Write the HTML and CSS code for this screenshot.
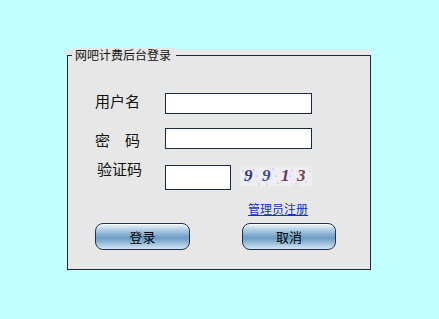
FILE: index.html
```html
<!DOCTYPE html>
<html lang="zh-CN">
<head>
<meta charset="utf-8">
<title>网吧计费后台登录</title>
<link rel="stylesheet" href="styles.css">
</head>
<body>
<div class="panel">
  <div class="box">
    <span class="legend">网吧计费后台登录</span>
    <div class="form">
      <div class="row r1"><span class="label l1">用户名</span><input class="field wide" type="text"></div>
      <div class="row r2"><span class="label l2">密　码</span><input class="field wide" type="password"></div>
      <div class="row r3"><span class="label l3">验证码</span><input class="field short" type="text">
        <svg class="captcha" width="72" height="19" viewBox="0 0 72 19">
          <rect width="72" height="19" fill="#eeeef2"/>
          <g fill="#8a8aa8">
            <circle cx="3" cy="4" r="0.6"/><circle cx="9" cy="15" r="0.6"/><circle cx="14" cy="3" r="0.6"/>
            <circle cx="19" cy="17" r="0.6"/><circle cx="24" cy="6" r="0.6"/><circle cx="29" cy="12" r="0.6"/>
            <circle cx="33" cy="2" r="0.6"/><circle cx="38" cy="16" r="0.6"/><circle cx="43" cy="5" r="0.6"/>
            <circle cx="47" cy="13" r="0.6"/><circle cx="52" cy="3" r="0.6"/><circle cx="56" cy="17" r="0.6"/>
            <circle cx="61" cy="8" r="0.6"/><circle cx="66" cy="15" r="0.6"/><circle cx="70" cy="4" r="0.6"/>
            <circle cx="6" cy="10" r="0.6"/><circle cx="17" cy="9" r="0.6"/><circle cx="36" cy="9" r="0.6"/>
            <circle cx="50" cy="9" r="0.6"/><circle cx="64" cy="11" r="0.6"/><circle cx="27" cy="17" r="0.6"/>
          </g>
          <g font-family="Liberation Serif, serif" font-style="italic" font-weight="bold" font-size="17">
            <text x="4" y="14" fill="#2b2f9a">9</text>
            <text x="22" y="14" fill="#3b4aa2">9</text>
            <text x="41" y="14" fill="#6a3560">1</text>
            <text x="57" y="14" fill="#7e4050">3</text>
          </g>
        </svg>
      </div>
      <div class="linkrow"><a class="link" href="#">管理员注册</a></div>
      <div class="buttons">
        <button class="btn b1" type="button">登录</button>
        <button class="btn b2" type="button">取消</button>
      </div>
    </div>
  </div>
</div>
</body>
</html>
```
FILE: styles.css
```css
html, body {
  margin: 0;
  padding: 0;
}
body {
  background: #c2ffff;
  font-family: "Noto Sans CJK SC", "Noto Sans", sans-serif;
  color: #000;
  width: 439px;
  height: 319px;
  overflow: hidden;
}
.panel {
  margin: 50px 0 0 67px;
  width: 304px;
  height: 220px;
  padding-top: 5px;
  box-sizing: border-box;
  background: #e7e7e7;
}
.box {
  position: relative;
  height: 215px;
  box-sizing: border-box;
  border: 1px solid #1b2a3e;
}
.legend {
  position: absolute;
  top: -8px;
  left: 4px;
  padding: 0 5px 0 3px;
  background: #e7e7e7;
  font-size: 12px;
  line-height: 14px;
  color: #111;
}
.form {
  padding: 37px 0 0 27px;
  display: flex;
  flex-direction: column;
}
.row {
  display: flex;
  align-items: flex-start;
}
.r1 { height: 21px; }
.r2 { height: 21px; margin-top: 14px; }
.r3 { height: 25px; margin-top: 16px; }
.label {
  width: 70px;
  box-sizing: border-box;
  font-size: 15px;
  line-height: 16px;
  color: #111;
  white-space: nowrap;
}
.l1 { margin-top: 0; }
.l2 { margin-top: 4px; }
.l3 { margin-top: -4px; padding-left: 2px; }
.field {
  margin: 0;
  padding: 0 2px;
  box-sizing: border-box;
  border: 1px solid #1b2a44;
  background: #fff;
  outline: none;
}
.wide { width: 147px; height: 21px; }
.short { width: 66px; height: 25px; }
.captcha {
  display: block;
  margin: 2px 0 0 9px;
}
.linkrow {
  margin: 10px 0 0 153px;
  height: 14px;
  line-height: 14px;
}
.link {
  font-size: 12px;
  color: #1034c0;
  text-decoration: underline;
}
.buttons {
  display: flex;
  margin-top: 9px;
}
.btn {
  height: 27px;
  margin: 0;
  padding: 0;
  border: 1px solid #22324c;
  border-radius: 8px;
  background: linear-gradient(to bottom, #eef6fc 0%, #b4d0e6 22%, #7aa6cc 48%, #6e9ec6 58%, #a2c4e0 80%, #d4e6f4 100%);
  box-shadow: inset 0 1px 0 #ffffff;
  font-family: "Noto Sans CJK SC", sans-serif;
  font-size: 13px;
  line-height: 25px;
  color: #000;
}
.b1 { width: 95px; }
.b2 { width: 94px; margin-left: 52px; }
```
